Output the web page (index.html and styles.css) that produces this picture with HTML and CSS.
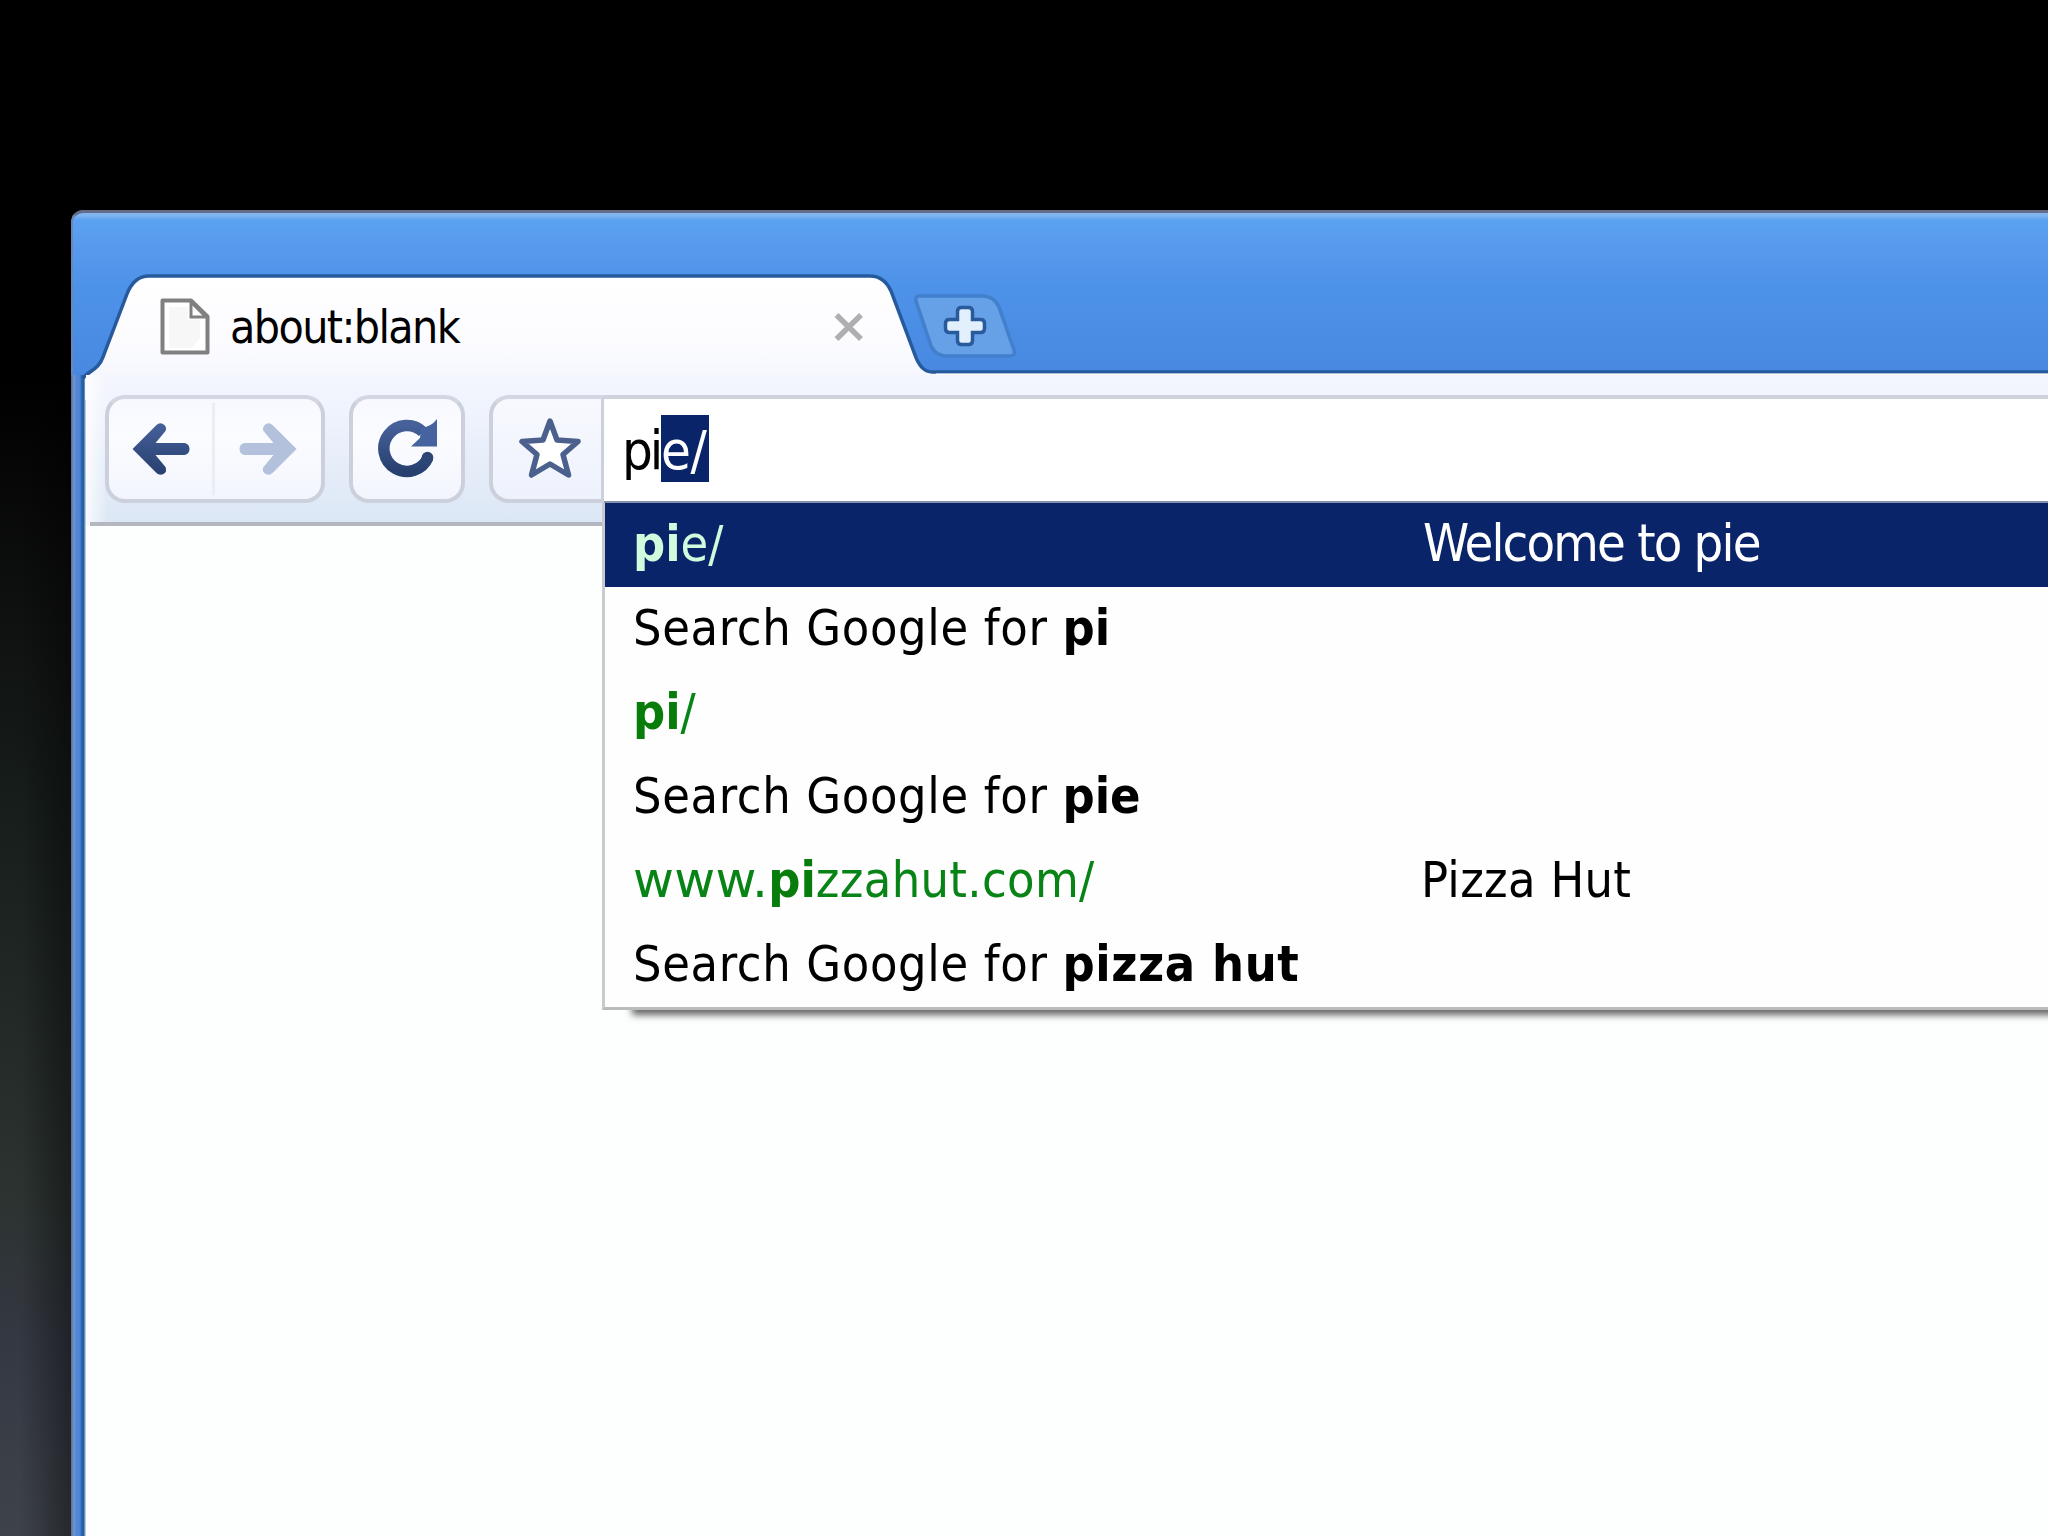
FILE: index.html
```html
<!DOCTYPE html>
<html lang="en">
<head>
<meta charset="utf-8">
<title>about:blank</title>
<link rel="stylesheet" href="styles.css">
</head>
<body>
<div class="desktop">
  <main class="window">
    <header class="titlebar">
      <svg class="frame" viewBox="71 210 1977 190" width="1977" height="190" aria-hidden="true">
        <defs>
          <linearGradient id="tabfill" x1="0" y1="276" x2="0" y2="400" gradientUnits="userSpaceOnUse">
            <stop offset="0" stop-color="#fff"/><stop offset=".5" stop-color="#fcfcff"/><stop offset="1" stop-color="#f2f4fd"/>
          </linearGradient>
        </defs>
        <path d="M85 400V376C89 371 99 369 103 357L127 294Q134 276 149 276H870Q884 276 891 291L915 355Q921 372 932 372H2052V400Z" fill="url(#tabfill)"/>
        <path d="M83 378C89 371 99 369 103 357L127 294Q134 276 149 276H870Q884 276 891 291L915 355Q921 372 932 372H2052" fill="none" stroke="#265a9c" stroke-width="3.5"/>
        <path d="M936 375.500H2048" stroke="#fff" stroke-width="4"/>
      </svg>
      <div class="tab">
        <svg class="page-icon" viewBox="0 0 50 58" width="50" height="58">
          <path d="M2.500 2.500H31L47.500 18.500V54.500H2.500Z" fill="#fff" stroke="#808080" stroke-width="4" stroke-linejoin="round"/>
          <path d="M9 9H28V22H40V40L32 50H9Z" fill="#f7f7f8"/>
          <path d="M31 4V19H46Z" fill="#fff" stroke="#808080" stroke-width="3"/>
        </svg>
        <span class="tab-title">about:blank</span>
        <svg class="close" viewBox="0 0 32 32" width="32" height="32"><path d="M3.500 4L28 28M28 4L3.500 28" stroke="#b0aeb0" stroke-width="5.500"/></svg>
      </div>
      <svg class="new-tab" viewBox="913 292 106 68" width="106" height="68">
        <path d="M919 296H982Q994 296 999 307L1014 350Q1016 356 1009 356H947Q936 356 931 346L916 301Q915 296 919 296Z" fill="#66a1e8" stroke="#427fcc" stroke-width="3.500"/>
        <path d="M961.500 307.500h7q4 0 4 4v8h8q4 0 4 4v5q0 4-4 4h-8v8q0 4-4 4h-7q-4 0-4-4v-8h-8q-4 0-4-4v-5q0-4 4-4h8v-8q0-4 4-4z" fill="#e2f0fd" stroke="#285a9c" stroke-width="3.500"/>
      </svg>
    </header>
    <nav class="toolbar">
      <div class="group history">
        <button class="btn back" aria-label="Back"><svg viewBox="0 0 58 54" width="59" height="54"><defs><linearGradient id="ink" x1="0" y1="0" x2="0" y2="1"><stop offset="0" stop-color="#46609a"/><stop offset="1" stop-color="#27406f"/></linearGradient></defs><path d="M1 27L25 3Q28 0 31.500 2Q36 5 34 9L24 21H53Q58 22 58 27Q58 32 53 33H24L34 45Q36 50 32 52Q28 54 25 51Z" fill="url(#ink)"/></svg></button>
        <button class="btn forward" aria-label="Forward"><svg viewBox="0 0 58 54" width="59" height="54"><path d="M57 27L33 3Q30 0 26.500 2Q22 5 24 9L34 21H5Q0 22 0 27Q0 32 5 33H34L24 45Q22 50 26 52Q30 54 33 51Z" fill="#b3c1dc"/></svg></button>
      </div>
      <button class="group reload" aria-label="Reload"><svg viewBox="0 0 60 60" width="60" height="60"><path d="M50 38.500A23 23 0 1 1 45 13" fill="none" stroke="url(#ink)" stroke-width="11.500"/><circle cx="49.500" cy="38.500" r="5.800" fill="#2d4676"/><path d="M59 0V27.500H33L42 19L43 9Q53 8 59 0Z" fill="#45639e"/></svg></button>
      <button class="group star" aria-label="Bookmark"><svg viewBox="0 0 64 64" width="64" height="64"><path d="M32 5L39 24L60 25.500L45 38.500L50.500 59L32 48L13.500 59L19 38.500L4 25.500L25 24Z" fill="#fff" stroke="#4b608c" stroke-width="5.500" stroke-linejoin="round"/></svg></button>
      <div class="omnibox"><span class="typed">pi</span><span class="completion">e/</span></div>
      <section class="suggestions">
        <div class="row selected"><span class="url"><b>pi</b>e/</span><span class="title">Welcome to pie</span></div>
        <div class="row"><span>Search Google for <b>pi</b></span></div>
        <div class="row"><span class="url"><b>pi</b>/</span></div>
        <div class="row"><span>Search Google for <b>pie</b></span></div>
        <div class="row"><span class="url"><span class="www">www.</span><b>pi</b>zzahut.com/</span><span class="title">Pizza Hut</span></div>
        <div class="row"><span>Search Google for <b class="wide">pizza hut</b></span></div>
      </section>
    </nav>
    <div class="page"></div>
  </main>
</div>
</body>
</html>
```
FILE: styles.css
```css
* { box-sizing: border-box; }
body {
  margin: 0;
  overflow: hidden;
  background: #000;
  font-family: "DejaVu Sans Condensed", "DejaVu Sans", sans-serif;
  font-stretch: condensed;
  color: #000;
}
.desktop {
  height: 1536px;
  padding: 210px 0 0 71px;
  background:
    linear-gradient(90deg, transparent 20px, rgba(0, 0, 0, .4) 71px),
    linear-gradient(#000 0, #000 380px, #0f1110 620px, #161d1a 800px, #2c3331 1200px, #343842 1340px, #3e434b 1536px);
}
.window {
  height: 1326px;
  display: flex;
  flex-direction: column;
  border-radius: 12px 0 0 0;
  overflow: hidden;
  background: linear-gradient(90deg, #626b88 0, #6e96d2 3px, #5688d4 5px, #4a83d2 9px, #255fa6 11px, #255fa6 13px, #a9b9d6 14px, #fff 16px);
}
.titlebar {
  position: relative;
  flex: 0 0 164px;
  display: flex;
  align-items: flex-start;
  border-top: 3px solid #636b87;
  border-left: 2px solid #6d86b5;
  border-radius: 12px 0 0 0;
  background: linear-gradient(#83b6f1 0, #7fb3f0 3px, #5ba1f1 7px, #579aed 35px, #4d92e9 75px, #4888e1 162px);
}
.frame { position: absolute; left: -2px; top: -3px; }
.tab {
  position: relative;
  width: 813px;
  height: 96px;
  margin: 66px 0 0 29px;
  padding: 0 50px 0 58px;
  display: flex;
  align-items: center;
}
.tab-title { margin-left: 20px; font-size: 46px; letter-spacing: -1.6px; line-height: 88px; margin-top: -1px; }
.close { margin-left: auto; }
.new-tab { position: relative; margin: 79px 0 0 -2px; }
.toolbar {
  position: relative;
  flex: 0 0 151px;
  margin-left: 15px;
  padding: 20px 0 0 19px;
  display: flex;
  align-items: flex-start;
  background:
    linear-gradient(#b4b7bf, #b4b7bf) 4px 147px / 100% 4px no-repeat,
    linear-gradient(90deg, rgba(255, 255, 255, .8), rgba(255, 255, 255, 0) 22px),
    linear-gradient(#f4f6fe 0, #f0f4fd 30px, #dce7f5 147px);
}
.group {
  height: 108px;
  margin: 0 24px 0 0;
  padding: 0;
  border: 4px solid #ccd0dd;
  border-top-color: #d4d6e1;
  border-radius: 20px;
  background: linear-gradient(#f7f9ff, #fbfcff 40%, #f2f5fd);
  display: flex;
  align-items: center;
  justify-content: center;
}
.history { width: 220px; }
.btn {
  height: 100px;
  padding: 0;
  border: 0;
  background: none;
  display: flex;
  align-items: center;
  justify-content: center;
}
.back { width: 103px; }
.forward { flex: 1; height: 92px; border-left: 3px solid #e9edf6; }
.reload { width: 116px; }
.reload svg { margin-left: 1px; }
.star { width: 115px; margin: 0; border-right-width: 3px; border-radius: 20px 0 0 20px; background: linear-gradient(#f8f9ff, #eef2fc); }
.star svg { margin: -2px 0 0 5px; }
.omnibox {
  flex: 1;
  height: 108px;
  padding: 16px 0 0 14px;
  border-top: 4px solid #d0d3db;
  border-bottom: 2px solid #8590ad;
  background: #fff;
  font-size: 54px;
  display: flex;
  align-items: flex-start;
}
.typed, .completion { padding-top: 4px; line-height: 63px; }
.typed { width: 43px; padding-left: 4px; letter-spacing: -3px; white-space: nowrap; }
.completion { width: 48px; background: #0a246a; color: #fff; letter-spacing: -.5px; }
.suggestions {
  position: absolute;
  left: 516px;
  right: 0;
  top: 128px;
  border-left: 3px solid #c8cad0;
  border-bottom: 3px solid #b9bbbd;
  background: #fefefe;
  box-shadow: 28px 7px 7px -2px #666;
}
.row {
  height: 84px;
  padding: 0 0 0 28px;
  display: grid;
  grid-template-columns: 788px 1fr;
  font-size: 50px;
  line-height: 83px;
  letter-spacing: .65px;
  white-space: nowrap;
}
.row b { font-weight: 700; letter-spacing: 0; }
.row b.wide { letter-spacing: .6px; }
.url { color: #088316; letter-spacing: .35px; }
.url b { color: #087d0b; }
.www { font-family: "DejaVu Sans", sans-serif; font-stretch: normal; letter-spacing: .3px; }
.title { letter-spacing: .3px; }
.selected { background: #0a246a; color: #fff; }
.selected .url, .selected .url b { color: #d0fbdc; letter-spacing: 0; }
.selected .title { font-size: 52px; letter-spacing: -1.8px; padding-left: 2px; line-height: 80px; }
.page { flex: 1; margin-left: 15px; background: #fdfefe; }
```
